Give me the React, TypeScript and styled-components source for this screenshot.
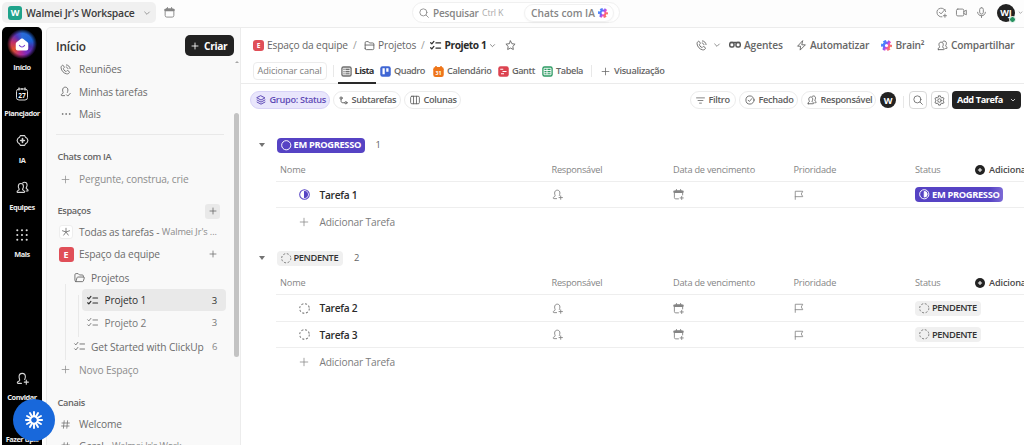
import React from "react";
import styled, { createGlobalStyle, css } from "styled-components";

const Global = createGlobalStyle`
  * { box-sizing: border-box; }
  body {
    margin: 0;
    background: #fdfdfd;
    font-family: "Open Sans", "Noto Sans", sans-serif;
    font-size: 10.2px;
    letter-spacing: -0.15px;
    color: #656565;
    overflow: hidden;
  }
`;

/* ---------- icons ---------- */

const paths: Record<string, React.ReactNode> = {
  chevron: <path d="M5 9l7 7 7-7" />,
  plus: <path d="M12 3v18M3 12h18" />,
  search: <><circle cx="10.5" cy="10.5" r="8.5" /><path d="M17 17L22.500 22.500" /></>,
  calendar: <><rect x="2.5" y="4" width="19" height="18" rx="3.5" /><path d="M3 6.500h18" strokeWidth="5" /><path d="M7.5 1v5M16.5 1v5" /></>,
  calendarPlus: <><path d="M12 21.5H6A3 3 0 0 1 3 18.500V7a3 3 0 0 1 3-3h12a3 3 0 0 1 3 3v6" /><path d="M3 6h18" strokeWidth="5" /><path d="M7.500 1v5M16.500 1v5M19 16v7M15.500 19.500h7" /></>,
  phone: <path d="M9.300 13.600c2 2.300 3.600 2.900 4.300 2.600l1.400-1.500c.6-.5 1.300-.6 2-.2l3 1.900c.8.6 1 1.500.5 2.300-1.300 2.200-3.500 3.300-6 2.800C8 20.300 2.900 14.400 2.300 8.400 2.100 6 3.200 4 5.200 2.900c.8-.4 1.700-.2 2.200.6l1.700 2.900c.4.700.3 1.400-.2 2L7.500 9.900c-.3.700.3 2.100 1.800 3.700zM13.500 6.500c2 .3 3.500 1.800 3.800 3.800M14 2c4.200.3 7.600 3.700 8 8" />,
  person: <path d="M10 21H4.500C2.500 21 2 19.600 3 18.400c1-1.200 2.700-1.600 3.600-2.600 1-1.200-.9-3.300-.9-7C5.700 5 8.200 2.500 11.500 2.500S17.300 5 17.300 8.800c0 2.400-1 4-1.300 5.200" />,
  dots: <><circle cx="3.500" cy="12" r="1" /><circle cx="12" cy="12" r="1" /><circle cx="20.500" cy="12" r="1" /></>,
  people: <><path d="M3 21h11.500c1.700 0 2-1.500 1-2.500-1.100-1.200-3.200-1.700-3.400-3-.2-1.200 1.600-2.300 1.600-5.500 0-3.300-1.800-5.300-4.700-5.300S4.300 6.700 4.300 10c0 3.200 1.800 4.300 1.600 5.500-.2 1.300-2.300 1.800-3.400 3-.9 1-.6 2.500.5 2.500z" /><path d="M12.500 3.500C13.500 2.600 14.500 2.300 15.600 2.300c3 0 4.900 2 4.900 5.200 0 3-1.900 4.300-1.700 5.500.2 1.300 1.800 1.700 2.800 2.900 1.100 1.300.8 2.600-.8 2.600h-2" /></>,
  folder: <><path d="M2.500 18V6A2.500 2.500 0 0 1 5 3.500h4.500L12 6.500h7A2.500 2.500 0 0 1 21.500 9v9.500A2.500 2.500 0 0 1 19 21H5a2.500 2.500 0 0 1-2.500-3zM2.500 11h19" /></>,
  folderOpen: <path d="M4 21L2 18V6a2.500 2.500 0 0 1 2.500-2.500H9L12 6.500h6A2.500 2.500 0 0 1 20.500 9v2M4 21h14.500a2 2 0 0 0 1.900-1.400l2-6.300A1.800 1.800 0 0 0 20.700 11H8.500a2 2 0 0 0-1.900 1.400L4 21z" />,
  list: <path d="M1.500 6l2.500 2.500L8.500 3M1.500 17l2.500 2.500L8.500 14M13 6.500h10M13 17.500h10" />,
  star: <path d="M12 2l3.100 6.100 6.900 1-4.900 4.800 1.100 6.800L12 17.600l-6.200 3.100 1.100-6.800L2 9.100l6.900-1z" />,
  bolt: <path d="M14 2L3.500 13.500h6.500L9 22l11.500-11.500H13.500z" />,
  gear: <><circle cx="12" cy="12" r="3.800" /><path d="M10 2h4l.8 3 2.200 1.200 3-.8 2 3.500-2.200 2.100v2L22 15.200l-2 3.400-3-.8-2.200 1.300L14 22h-4l-.8-2.900L7 17.800l-3 .8-2-3.400L4.200 13v-2L2 8.900l2-3.500 3 .8L9.200 5z" /></>,
  layers: <path d="M12 2l9.500 5L12 12 2.500 7zM2.500 12l9.500 5 9.500-5M2.500 17l9.500 5 9.500-5" />,
  subtasks: <><circle cx="5.500" cy="5.500" r="3" /><circle cx="18.500" cy="18" r="3" /><path d="M5.500 8.500V13c0 3.500 1.500 5 5 5h5" /></>,
  columns: <><rect x="1.500" y="3" width="21" height="18" rx="3" /><path d="M8.500 3v18M15.500 3v18" /></>,
  filter: <path d="M1.500 5h21M5.500 12h13M9.500 19h5" />,
  check: <><circle cx="12" cy="12" r="9.800" /><path d="M7.500 12.500l3 3 6-7" /></>,
  checkPlus: <><path d="M21 10A9.500 9.500 0 1 0 13 21.500M7.500 11.500l3.500 3.500L20 5" /><path d="M19.500 15.500v7M16 19h7" /></>,
  video: <path d="M4 4.500h10a3 3 0 0 1 3 3v9a3 3 0 0 1-3 3H4a3 3 0 0 1-3-3v-9a3 3 0 0 1 3-3zM17 10l5.500-3v10L17 14" />,
  mic: <><rect x="8" y="1.500" width="8" height="14" rx="4" /><path d="M3.500 11.500c.5 5 4 7.500 8.500 7.500s8-2.500 8.500-7.500M12 19v4" /></>,
  flag: <path d="M3 22.500V3h18l-3.500 6.500L21 16H3" />,
  hash: <path d="M8.500 2L6.500 22M17.500 2l-2 20M2.500 8h20M1.500 16h20" />,
  hex: <><path d="M8 3h8l1.500 3 3 2L22 12l-1.500 4-3 2L16 21H8l-1.500-3-3-2L2 12l1.500-4 3-2z" /><path d="M12 8.500v7M8.500 12h7" strokeWidth="3" /></>,
  asterisk: <path d="M12 12V3M12 12l8.500-3M12 12l5.500 7.500M12 12l-5.500 7.500M12 12L3.500 9" />,
};

type IconProps = { n: string; s?: number; w?: number; c?: string };

const Svg = styled.svg`
  display: block;
  flex: none;
  overflow: visible;
`;

const Icon = ({ n, s = 11, w = 2, c = "currentColor" }: IconProps) => (
  <Svg width={s} height={s} viewBox="0 0 24 24" fill="none" stroke={c} strokeWidth={w} strokeLinecap="round" strokeLinejoin="round">
    {paths[n]}
  </Svg>
);

const PersonMark = ({ s = 11, mark, w = 2 }: { s?: number; mark: "plus" | "check"; w?: number }) => (
  <Svg width={s} height={s} viewBox="0 0 24 24" fill="none" stroke="currentColor" strokeWidth={w} strokeLinecap="round" strokeLinejoin="round">
    {paths.person}
    <path d={mark === "plus" ? "M19 15v7.500M15.300 18.700h7.500" : "M14 19l3 3 5.500-6"} />
  </Svg>
);

const Brain = ({ s = 11 }: { s?: number }) => (
  <Svg width={s} height={s} viewBox="0 0 24 24">
    <defs>
      <linearGradient id="brain" x1="0" y1="0.200" x2="1" y2="0.800">
        <stop offset="0" stopColor="#3b8cff" />
        <stop offset="0.400" stopColor="#7a5cf5" />
        <stop offset="0.650" stopColor="#e84bd0" />
        <stop offset="1" stopColor="#ff7a45" />
      </linearGradient>
    </defs>
    <g fill="none" stroke="url(#brain)" strokeWidth="5">
      <circle cx="12" cy="12" r="6" />
      <circle cx="12" cy="12" r="9.500" strokeDasharray="6 3.950" strokeDashoffset="3" />
    </g>
  </Svg>
);

const StatusRing = ({ kind, c, s = 11 }: { kind: "open" | "half" | "dashed"; c: string; s?: number }) => (
  <Svg width={s} height={s} viewBox="0 0 24 24" fill="none" stroke={c} strokeWidth="2.200">
    <circle cx="12" cy="12" r="10.500" strokeDasharray={kind === "dashed" ? "4.500 3.750" : undefined} />
    {kind === "half" && <path d="M12 5.500a6.500 6.500 0 0 1 0 13z" fill={c} stroke={c} />}
  </Svg>
);

/* ---------- text ---------- */

const Text = styled.span<{ $w?: number; $size?: number; $weight?: number; $color?: string; $ls?: number; $ml?: number }>`
  flex: none;
  white-space: nowrap;
  line-height: 16px;
  ${(p) => p.$w !== undefined && css`width: ${p.$w}px;`}
  ${(p) => p.$size && css`font-size: ${p.$size}px;`}
  ${(p) => p.$weight && css`font-weight: ${p.$weight};`}
  ${(p) => p.$color && css`color: ${p.$color};`}
  ${(p) => p.$ls !== undefined && css`letter-spacing: ${p.$ls}px;`}
  margin-left: ${(p) => p.$ml ?? 0}px;
`;

const Small = styled(Text)`
  font-size: 9.200px;
  font-weight: ${(p) => p.$weight ?? 600};
  letter-spacing: ${(p) => p.$ls ?? -0.32}px;
`;

/* ---------- top bar ---------- */

const Screen = styled.div`
  position: relative;
  width: 1024px;
  height: 445px;
  overflow: hidden;
  display: flex;
  flex-direction: column;
`;

const TopBar = styled.header`
  flex: none;
  height: 27px;
  display: flex;
  align-items: flex-start;
  padding: 2px 1px 0 2px;
`;

const Workspace = styled.div`
  flex: none;
  width: 154px;
  height: 21px;
  border-radius: 5px;
  background: #f0f0f0;
  display: flex;
  align-items: center;
  padding-left: 6px;
`;

const Tile = styled.span<{ $bg: string; $s: number; $fs: number; $r?: number }>`
  flex: none;
  width: ${(p) => p.$s}px;
  height: ${(p) => p.$s}px;
  border-radius: ${(p) => p.$r ?? 3}px;
  background: ${(p) => p.$bg};
  color: #fff;
  font-weight: 700;
  font-size: ${(p) => p.$fs}px;
  display: flex;
  align-items: center;
  justify-content: center;
`;

const TopSlot = styled.div<{ $ml: number }>`
  margin-left: ${(p) => p.$ml}px;
  height: 21px;
  display: flex;
  align-items: center;
`;

const SearchBox = styled.div`
  flex: none;
  margin-left: 237px;
  width: 208px;
  height: 21px;
  border: 1px solid #f0f0f0;
  border-radius: 11px;
  background: #fff;
  display: flex;
  align-items: center;
  padding-left: 6px;
  color: #858585;
`;

const ChatPill = styled.div`
  flex: none;
  height: 18px;
  width: 90px;
  margin-left: 19px;
  border-radius: 9px;
  border: 1px solid #f1f1f1;
  box-shadow: 0 1px 2px rgba(0, 0, 0, 0.04);
  display: flex;
  align-items: center;
  padding-left: 6px;
`;

const TopActions = styled.div`
  flex: none;
  margin-left: auto;
  height: 21px;
  display: flex;
  align-items: center;
  gap: 9px;
  color: #7e7e7e;
`;

const Account = styled.div`
  display: flex;
  align-items: center;
  gap: 3px;
  margin-left: 1.500px;
`;

const Avatar = styled.span<{ $s: number }>`
  position: relative;
  flex: none;
  width: ${(p) => p.$s}px;
  height: ${(p) => p.$s}px;
  border-radius: 50%;
  background: #222;
  color: #fff;
  font-size: 9px;
  font-weight: 700;
  display: flex;
  align-items: center;
  justify-content: center;
`;

const Online = styled.i`
  position: absolute;
  right: -1px;
  bottom: -1px;
  width: 7px;
  height: 7px;
  border-radius: 50%;
  background: #27915f;
  border: 0.500px solid #fff;
`;

/* ---------- left rail ---------- */

const Body = styled.div`
  flex: 1;
  min-height: 0;
  display: flex;
`;

const Rail = styled.nav`
  flex: none;
  width: 40px;
  margin-left: 2px;
  background: #000;
  border-radius: 5px 5px 0 0;
  color: #fff;
  display: flex;
  flex-direction: column;
  align-items: center;
`;

const RailItem = styled.div<{ $h?: number }>`
  height: ${(p) => p.$h ?? 47}px;
  width: 40px;
  flex: none;
  display: flex;
  flex-direction: column;
  align-items: center;
  color: #d8d8d8;
`;

const RailIcon = styled.div<{ $h?: number }>`
  height: ${(p) => p.$h ?? 27}px;
  display: flex;
  align-items: center;
`;

const RailLabel = styled.span`
  font-size: 7.400px;
  font-weight: 700;
  line-height: 12px;
  letter-spacing: -0.450px;
  white-space: nowrap;
  color: #ececec;
`;

const Glow = styled.div`
  width: 30px;
  height: 30px;
  border-radius: 50%;
  background: radial-gradient(circle, rgba(0, 0, 0, 0) 50%, #000 71%),
    conic-gradient(from 0deg, #2a6bd8, #1b62d6 20%, #4a2fa8 30%, #7a2cc0 42%, #b52a92 52%, #e0522c 66%, #c0306a 78%, #5534b8 90%, #2a6bd8);
  display: flex;
  align-items: center;
  justify-content: center;
`;

const RailSpacer = styled.div`
  flex: 1;
`;

const Launcher = styled.button`
  position: absolute;
  left: 13px;
  top: 399px;
  width: 42px;
  height: 42px;
  padding: 0;
  border: 0;
  border-radius: 50%;
  background: #1868db;
  display: flex;
  align-items: center;
  justify-content: center;
`;

/* ---------- sidebar ---------- */

const Sidebar = styled.aside`
  position: relative;
  flex: none;
  width: 195px;
  margin-left: 4px;
  background: #f9f9f9;
  border: 1px solid #ececec;
  border-bottom: 0;
  border-radius: 5px 0 0 0;
  height: 418px;
  overflow: hidden;
`;

const SideHead = styled.div`
  height: 30px;
  padding: 5px 6px 0 9px;
  display: flex;
  justify-content: space-between;
  align-items: center;
`;

const CreateButton = styled.button`
  width: 49px;
  height: 21px;
  padding: 0 0 0 6px;
  border: 0;
  border-radius: 5px;
  background: #222;
  color: #fff;
  font: inherit;
  display: flex;
  align-items: center;
`;

const SideRow = styled.div<{ $h: number; $color?: string }>`
  position: relative;
  height: ${(p) => p.$h}px;
  display: flex;
  align-items: center;
  color: ${(p) => p.$color ?? "#6c6c6c"};
`;

const IconCell = styled.span<{ $w?: number }>`
  flex: none;
  width: ${(p) => p.$w ?? 32}px;
  padding-left: ${(p) => (p.$w ? 0 : 11.5)}px;
  display: flex;
  align-items: center;
`;

const IconCenter = styled.span`
  width: 14px;
  flex: none;
  display: flex;
  justify-content: center;
`;

const Divider = styled.hr`
  border: 0;
  border-top: 1px solid #e9e9e9;
  margin: 9px 16px 9px 9px;
`;

const SideTitle = styled.div<{ $h: number; $mt?: number }>`
  margin-top: ${(p) => p.$mt ?? 0}px;
  height: ${(p) => p.$h}px;
  padding-left: 10.500px;
  display: flex;
  align-items: center;
`;

const AddTile = styled.span`
  width: 15px;
  height: 15px;
  border-radius: 3px;
  background: #e9e9e9;
  display: flex;
  align-items: center;
  justify-content: center;
`;

const WhiteTile = styled.span`
  width: 14px;
  height: 14px;
  border-radius: 3px;
  background: #fff;
  border: 1px solid #eee;
  color: #858585;
  display: flex;
  align-items: center;
  justify-content: center;
`;

const Tree = styled.div`
  margin-left: 18px;
  position: relative;
`;

const TreeLine = styled.i<{ $x: number; $top: number; $h: number }>`
  position: absolute;
  left: ${(p) => p.$x}px;
  top: ${(p) => p.$top}px;
  width: 1px;
  height: ${(p) => p.$h}px;
  background: #e9e9e9;
`;

const ProjectRow = styled.div<{ $h: number; $active?: boolean }>`
  height: ${(p) => p.$h}px;
  margin: 0 14px 0 17px;
  padding: 0 9px 0 5px;
  border-radius: 4px;
  display: flex;
  align-items: center;
  background: ${(p) => (p.$active ? "#e9e9e9" : "transparent")};
  color: ${(p) => (p.$active ? "#2f2f2f" : "#777")};
`;

const Count = styled.span`
  margin-left: auto;
  font-size: 9.500px;
`;

const ScrollThumb = styled.i`
  position: absolute;
  right: 1px;
  top: 85px;
  width: 5px;
  height: 244px;
  border-radius: 2.500px;
  background: #c3c3c3;
`;

const ScrollArrow = styled.i`
  position: absolute;
  right: 1px;
  top: 33px;
  border: 2.500px solid transparent;
  border-top: 0;
  border-bottom: 2.500px solid #a5a5a5;
`;

/* ---------- main ---------- */

const Main = styled.main`
  flex: 1;
  min-width: 0;
  height: 418px;
  overflow: hidden;
  background: #fff;
  border-top: 1px solid #ececec;
`;

const Crumbs = styled.div`
  height: 34px;
  padding-left: 12px;
  display: flex;
  align-items: center;
  color: #666;
`;

const Tabs = styled.div`
  height: 22px;
  padding-left: 12px;
  border-bottom: 1px solid #ebebeb;
  display: flex;
  align-items: flex-start;
`;

const ChannelButton = styled.span`
  flex: none;
  width: 74px;
  height: 18px;
  padding-left: 3.500px;
  border: 1px solid #ececec;
  border-radius: 4px;
  display: flex;
  align-items: center;
  color: #7d7d7d;
`;

const Bar = styled.i<{ $l: number; $r: number }>`
  flex: none;
  width: 1px;
  height: 12px;
  margin: 3px ${(p) => p.$r}px 0 ${(p) => p.$l}px;
  background: #e8e8e8;
`;

const Tab = styled.div<{ $w: number; $active?: boolean }>`
  flex: none;
  width: ${(p) => p.$w}px;
  height: 22px;
  padding: 0 0 2px ${(p) => (p.$active ? 3 : 0)}px;
  margin-right: ${(p) => (p.$active ? 4.5 : 0)}px;
  display: flex;
  align-items: center;
  gap: 3px;
  border-bottom: 2px solid ${(p) => (p.$active ? "#2a2a2a" : "transparent")};
`;

const Filters = styled.div`
  height: 32px;
  padding: 0 0 0 9px;
  display: flex;
  align-items: center;
`;

const Pill = styled.div<{ $w: number; $mr: number; $on?: boolean }>`
  flex: none;
  width: ${(p) => p.$w}px;
  height: 18px;
  margin-right: ${(p) => p.$mr}px;
  padding-left: 5px;
  border-radius: 9px;
  border: 1px solid ${(p) => (p.$on ? "#d8d3f7" : "#ececec")};
  background: ${(p) => (p.$on ? "#e9e6fc" : "#fff")};
  color: ${(p) => (p.$on ? "#5f4bb6" : "#5c5c5c")};
  display: flex;
  align-items: center;
  gap: 3.500px;
`;

const SquareButton = styled.span`
  flex: none;
  width: 18px;
  height: 18px;
  margin-right: 3.500px;
  border: 1px solid #d9d9d9;
  border-radius: 4px;
  display: flex;
  align-items: center;
  justify-content: center;
`;

const AddTask = styled.button`
  flex: none;
  width: 69px;
  height: 18px;
  padding: 0 5px 0 5px;
  border: 0;
  border-radius: 4px;
  background: #222;
  color: #fff;
  font: inherit;
  display: flex;
  align-items: center;
  justify-content: space-between;
`;

const Spacer = styled.i<{ $w?: number }>`
  flex: ${(p) => (p.$w ? "none" : "1")};
  width: ${(p) => p.$w ?? 0}px;
`;

const Group = styled.section<{ $mt: number }>`
  margin-top: ${(p) => p.$mt}px;
  padding-left: 35px;
`;

const GroupHead = styled.div`
  height: 20px;
  margin-left: -17px;
  display: flex;
  align-items: center;
`;

const Caret = styled.i`
  width: 0;
  border: 3.500px solid transparent;
  border-bottom: 0;
  border-top: 4.500px solid #737373;
  margin-right: 11.500px;
`;

const Badge = styled.span<{ $purple?: boolean; $w: number; $fade?: boolean }>`
  width: ${(p) => p.$w}px;
  height: 15px;
  padding-left: 4px;
  border-radius: 4px;
  background: ${(p) => (p.$purple ? (p.$fade ? "linear-gradient(90deg, #5643c4 85%, #7d6bd6)" : "#5643c4") : "#f0f0f0")};
  color: ${(p) => (p.$purple ? "#fff" : "#333")};
  display: flex;
  align-items: center;
  gap: 2.500px;
`;

const Row = styled.div<{ $h: number; $line?: boolean; $pt?: number }>`
  height: ${(p) => p.$h}px;
  padding-top: ${(p) => p.$pt ?? 0}px;
  display: grid;
  grid-template-columns: 275.500px 121.500px 120.500px 121.500px 60px auto;
  align-items: center;
  border-bottom: 1px solid ${(p) => (p.$line === false ? "transparent" : "#eeeeee")};
  color: #858585;
  white-space: nowrap;
`;

const NameCell = styled.div`
  display: flex;
  align-items: center;
  padding-left: 23px;
`;

const AddField = styled.div`
  display: flex;
  align-items: center;
  gap: 4px;
`;

const PlusDisc = () => (
  <Svg width="10" height="10" viewBox="0 0 24 24">
    <circle cx="12" cy="12" r="12" fill="#222" />
    <path d="M12 7v10M7 12h10" stroke="#fff" strokeWidth="2.500" />
  </Svg>
);

const ViewTile = ({ kind }: { kind: "list" | "board" | "cal" | "gantt" | "table" }) => {
  const bg = { list: "#707070", board: "#3f66d4", cal: "#ee7519", gantt: "#dc4350", table: "#2c9b63" }[kind];
  return (
    <Svg width="11" height="11" viewBox="0 0 22 22">
      {kind === "cal" && <path d="M6 0v5M16 0v5" stroke={bg} strokeWidth="3" />}
      <rect x="0.500" y={kind === "cal" ? 2 : 0.500} width="21" height={kind === "cal" ? 20 : 21} rx="4.500" fill={bg} />
      {kind === "list" && <path d="M4 4.500h14v13H4zM4 9h14M4 13.500h14M8 4.500v13" stroke="#fff" strokeWidth="1.600" fill="none" />}
      {kind === "board" && <path d="M5 4.500h4.500v12H5zM12.500 4.500H17v7h-4.500z" fill="#fff" />}
      {kind === "cal" && (
        <text x="11" y="17" fontSize="10.500" fontWeight="700" fill="#fff" textAnchor="middle">31</text>
      )}
      {kind === "gantt" && <path d="M4.500 6.500h6M9 11h8M6 15.500h6" stroke="#fff" strokeWidth="2.400" />}
      {kind === "table" && <path d="M4 4.500h14v13H4zM4 9h14M4 13.500h14M10 4.500v13" stroke="#fff" strokeWidth="1.800" fill="none" />}
    </Svg>
  );
};

const Glasses = () => (
  <Svg width="12" height="8" viewBox="0 0 24 16" fill="none" stroke="#555" strokeWidth="3">
    <rect x="1.500" y="3" width="8.500" height="9" rx="3" />
    <rect x="14" y="3" width="8.500" height="9" rx="3" />
    <path d="M2 3h20" />
  </Svg>
);

const RailCalendar = () => (
  <Svg width="14" height="14" viewBox="0 0 28 28" fill="none" stroke="#d8d8d8" strokeWidth="2">
    <rect x="3" y="4" width="22" height="22" rx="5" />
    <path d="M8 1v6M20 1v6M14 2v4" strokeWidth="2.500" />
    <text x="14" y="21.500" fontSize="13" fontWeight="700" fill="#fff" stroke="none" textAnchor="middle">27</text>
  </Svg>
);

const Grid9 = () => (
  <Svg width="12" height="12" viewBox="0 0 12 12" fill="#d8d8d8">
    {[1.3, 6, 10.7].map((y) => [1.3, 6, 10.7].map((x) => <circle key={`${x}-${y}`} cx={x} cy={y} r="1.050" />))}
  </Svg>
);

const InProgress = ({ half }: { half?: boolean }) => (
  <Badge $purple $fade={half} $w={88}>
    <StatusRing kind={half ? "half" : "open"} c="#fff" s={10.5} />
    <Text $weight={700} $size={9.3} $ls={-0.33}>EM PROGRESSO</Text>
  </Badge>
);

const Pending = () => (
  <Badge $w={66}>
    <StatusRing kind="dashed" c="#777" s={10.5} />
    <Text $weight={600} $size={9.3} $ls={-0.4}>PENDENTE</Text>
  </Badge>
);

const TaskRow = ({ name, half, h }: { name: string; half?: boolean; h: number }) => (
  <Row $h={h}>
    <NameCell>
      <StatusRing kind={half ? "half" : "dashed"} c={half ? "#5643c4" : "#777"} />
      <Text $ml={9.5} $weight={600} $color="#2b2b2b" $size={10.2} $ls={-0.28}>{name}</Text>
    </NameCell>
    <PersonMark mark="plus" w={2} />
    <Icon n="calendarPlus" />
    <Icon n="flag" s={10} />
    {half ? <InProgress half /> : <Pending />}
    <i />
  </Row>
);

const HeadRow = ({ h }: { h: number }) => (
  <Row $h={h} $pt={3}>
    <Small $weight={500} $ls={-0.15} $ml={4}>Nome</Small>
    <Small $weight={500} $ls={-0.25}>Responsável</Small>
    <Small $weight={500} $ls={-0.22}>Data de vencimento</Small>
    <Small $weight={500} $ls={-0.2}>Prioridade</Small>
    <Small $weight={500} $ls={-0.2}>Status</Small>
    <AddField>
      <PlusDisc />
      <Small $color="#4a4a4a" $ls={-0.15}>Adicionar</Small>
    </AddField>
  </Row>
);

const AddRow = ({ h }: { h: number }) => (
  <Row $h={h} $line={false}>
    <NameCell>
      <Icon n="plus" s={10} w={1.8} />
      <Text $ml={10.5} $color="#7c7c7c">Adicionar Tarefa</Text>
    </NameCell>
  </Row>
);

export default function App() {
  return (
    <Screen>
      <Global />
      <TopBar>
        <Workspace>
          <Tile $bg="#1fa38b" $s={14} $fs={9}>W</Tile>
          <Text $w={117} $ml={4} $weight={600} $color="#3c3c3c" $size={10.4} $ls={-0.23}>Walmei Jr's Workspace</Text>
          <Icon n="chevron" s={8} w={2.5} c="#888" />
        </Workspace>
        <TopSlot $ml={8}><Icon n="calendar" s={11} c="#858585" /></TopSlot>
        <SearchBox>
          <Icon n="search" s={10} />
          <Text $w={49} $ml={4} $weight={600} $size={10}>Pesquisar</Text>
          <Text $w={23} $size={8.8} $color="#aaa">Ctrl K</Text>
          <ChatPill>
            <Text $w={67} $weight={600} $ls={0}>Chats com IA</Text>
            <Brain s={10} />
          </ChatPill>
        </SearchBox>
        <TopActions>
          <Icon n="checkPlus" s={11} />
          <Icon n="video" s={11} />
          <Icon n="mic" s={11} />
          <Account>
            <Avatar $s={18}>WJ<Online /></Avatar>
            <Icon n="chevron" s={5} w={3} />
          </Account>
        </TopActions>
      </TopBar>

      <Body>
        <Rail>
          <RailItem $h={53}>
            <RailIcon $h={34}>
              <Glow>
                <Svg width="14" height="13" viewBox="0 0 28 26">
                  <path d="M12 1.500c1.200-1 2.800-1 4 0l9 7c1 .8 1.500 1.800 1.500 3V21a4 4 0 0 1-4 4h-17a4 4 0 0 1-4-4v-9.500c0-1.200.5-2.200 1.500-3z" fill="#fff" />
                  <path d="M9 15c2.500 4 7.500 4 10 0" fill="none" stroke="#7b3fd0" strokeWidth="2.400" strokeLinecap="round" />
                </Svg>
              </Glow>
            </RailIcon>
            <RailLabel>Início</RailLabel>
          </RailItem>
          <RailItem><RailIcon><RailCalendar /></RailIcon><RailLabel>Planejador</RailLabel></RailItem>
          <RailItem><RailIcon><Icon n="hex" s={13} /></RailIcon><RailLabel>IA</RailLabel></RailItem>
          <RailItem><RailIcon><Icon n="people" s={13} /></RailIcon><RailLabel>Equipes</RailLabel></RailItem>
          <RailItem><RailIcon><Grid9 /></RailIcon><RailLabel>Mais</RailLabel></RailItem>
          <RailSpacer />
          <RailItem $h={43}><RailIcon $h={26}><PersonMark mark="plus" s={13} /></RailIcon><RailLabel>Convidar</RailLabel></RailItem>
          <RailItem $h={37}><RailIcon $h={26} /><RailLabel>Fazer up...</RailLabel></RailItem>
        </Rail>

        <Sidebar>
          <SideHead>
            <Text $size={11.8} $weight={600} $color="#333">Início</Text>
            <CreateButton>
              <Icon n="plus" s={8} w={2.6} />
              <Text $ml={5} $weight={700} $size={10.2} $ls={-0.35}>Criar</Text>
            </CreateButton>
          </SideHead>
          <SideRow $h={22}><IconCell><IconCenter><Icon n="phone" /></IconCenter></IconCell><Text>Reuniões</Text></SideRow>
          <SideRow $h={23}><IconCell><IconCenter><PersonMark mark="check" /></IconCenter></IconCell><Text>Minhas tarefas</Text></SideRow>
          <SideRow $h={22}><IconCell><IconCenter><Icon n="dots" s={10} /></IconCenter></IconCell><Text>Mais</Text></SideRow>
          <Divider />
          <SideTitle $h={26}><Small>Chats com IA</Small></SideTitle>
          <SideRow $h={18} $color="#8d8d8d"><IconCell><IconCenter><Icon n="plus" s={9} /></IconCenter></IconCell><Text>Pergunte, construa, crie</Text></SideRow>
          <SideTitle $h={22} $mt={12}>
            <Small $w={147.5}>Espaços</Small>
            <AddTile><Icon n="plus" s={8} w={2.3} /></AddTile>
          </SideTitle>
          <SideRow $h={20}>
            <IconCell><WhiteTile><Icon n="asterisk" s={10} w={2.4} /></WhiteTile></IconCell>
            <Text $ls={-0.17}>Todas as tarefas -</Text>
            <Text $ml={2.5} $size={9.2} $ls={-0.1} $color="#8b8b8b">Walmei Jr's ...</Text>
          </SideRow>
          <SideRow $h={24}>
            <IconCell><Tile $bg="#e04f58" $s={15} $fs={9}>E</Tile></IconCell>
            <Text $w={130}>Espaço da equipe</Text>
            <Icon n="plus" s={8} w={2.3} />
          </SideRow>
          <Tree>
            <TreeLine $x={0} $top={18} $h={76} />
            <TreeLine $x={13} $top={29} $h={42} />
            <SideRow $h={23}>
              <Spacer $w={8.5} /><IconCell $w={17.5}><Icon n="folderOpen" s={11} /></IconCell><Text>Projetos</Text>
            </SideRow>
            <ProjectRow $h={22} $active><IconCell $w={17.5}><Icon n="list" s={11} w={2.6} /></IconCell><Text>Projeto 1</Text><Count>3</Count></ProjectRow>
            <ProjectRow $h={23}><IconCell $w={17.5}><Icon n="list" s={11} /></IconCell><Text>Projeto 2</Text><Count>3</Count></ProjectRow>
            <SideRow $h={25}>
              <Spacer $w={8.5} /><IconCell $w={17.5}><Icon n="list" s={11} /></IconCell>
              <Text $w={121} $ls={-0.1}>Get Started with ClickUp</Text><Text $size={9.5} $color="#888">6</Text>
            </SideRow>
          </Tree>
          <SideRow $h={21} $color="#8d8d8d"><IconCell><IconCenter><Icon n="plus" s={9} /></IconCenter></IconCell><Text>Novo Espaço</Text></SideRow>
          <SideTitle $h={22} $mt={12}><Small>Canais</Small></SideTitle>
          <SideRow $h={20}><IconCell><IconCenter><Icon n="hash" s={9} /></IconCenter></IconCell><Text>Welcome</Text></SideRow>
          <SideRow $h={24}>
            <IconCell><IconCenter><Icon n="hash" s={9} /></IconCenter></IconCell><Text>Geral -</Text>
            <Text $ml={2.5} $size={9.2} $color="#8b8b8b">Walmei Jr's Work...</Text>
          </SideRow>
          <ScrollArrow />
          <ScrollThumb />
        </Sidebar>

        <Main>
          <Crumbs>
            <Tile $bg="#e04f58" $s={11} $fs={6.5}>E</Tile>
            <Text $w={83} $ml={3}>Espaço da equipe</Text>
            <Text $w={10.5} $ml={3} $color="#999">/</Text>
            <Icon n="folder" s={11} />
            <Text $w={39} $ml={3.5}>Projetos</Text>
            <Text $w={9} $ml={4} $color="#999">/</Text>
            <Icon n="list" s={11} w={2.8} c="#2f2f2f" />
            <Text $w={44.5} $ml={3.5} $weight={700} $color="#2b2b2b" $ls={-0.42}>Projeto 1</Text>
            <Icon n="chevron" s={7} w={2.6} />
            <Spacer $w={8.5} />
            <Icon n="star" s={11} />
            <Spacer />
            <Icon n="phone" s={11} />
            <Spacer $w={6.5} />
            <Icon n="chevron" s={8} w={2.2} />
            <Spacer $w={8} />
            <Glasses />
            <Text $w={52} $ml={3} $weight={600} $ls={-0.12}>Agentes</Text>
            <Icon n="bolt" s={11} />
            <Text $w={71} $ml={3} $weight={600} $ls={-0.18}>Automatizar</Text>
            <Brain s={11} />
            <Text $w={41} $ml={3.5} $weight={600} $ls={-0.2}>Brain²</Text>
            <Icon n="people" s={11} />
            <Text $w={73} $ml={3.5} $weight={600} $ls={-0.18}>Compartilhar</Text>
          </Crumbs>
          <Tabs>
            <ChannelButton><Small $weight={400} $ls={-0.08}>Adicionar canal</Small></ChannelButton>
            <Bar $l={6} $r={3.5} />
            <Tab $w={38} $active><ViewTile kind="list" /><Small $weight={700} $color="#333" $ls={-0.55}>Lista</Small></Tab>
            <Tab $w={53}><ViewTile kind="board" /><Small $ls={-0.45}>Quadro</Small></Tab>
            <Tab $w={65}><ViewTile kind="cal" /><Small $ls={-0.35}>Calendário</Small></Tab>
            <Tab $w={44}><ViewTile kind="gantt" /><Small $ls={-0.45}>Gantt</Small></Tab>
            <Tab $w={50}><ViewTile kind="table" /><Small $ls={-0.4}>Tabela</Small></Tab>
            <Bar $l={-1} $r={9} />
            <Tab $w={80}><Icon n="plus" s={9} /><Small $ml={1} $ls={-0.3}>Visualização</Small></Tab>
          </Tabs>
          <Filters>
            <Pill $w={80} $mr={3} $on><Icon n="layers" s={10} w={2.4} /><Small>Grupo: Status</Small></Pill>
            <Pill $w={68} $mr={3}><Icon n="subtasks" s={9} w={2.4} /><Small>Subtarefas</Small></Pill>
            <Pill $w={57} $mr={0}><Icon n="columns" s={10} /><Small>Colunas</Small></Pill>
            <Spacer />
            <Pill $w={46} $mr={3}><Icon n="filter" s={9} /><Small>Filtro</Small></Pill>
            <Pill $w={59} $mr={3}><Icon n="check" s={10} /><Small>Fechado</Small></Pill>
            <Pill $w={75} $mr={4}><Icon n="people" s={10} /><Small>Responsável</Small></Pill>
            <Avatar $s={16}>W</Avatar>
            <Bar $l={7} $r={5} />
            <SquareButton><Icon n="search" s={10} /></SquareButton>
            <SquareButton><Icon n="gear" s={11} /></SquareButton>
            <AddTask><Small $weight={700} $ls={-0.4}>Add Tarefa</Small><Icon n="chevron" s={6} w={3} /></AddTask>
            <Spacer $w={3} />
          </Filters>

          <Group $mt={19}>
            <GroupHead>
              <Caret />
              <InProgress />
              <Text $ml={11} $size={9.4}>1</Text>
            </GroupHead>
            <HeadRow h={27} />
            <TaskRow name="Tarefa 1" half h={26} />
            <AddRow h={28} />
          </Group>
          <Group $mt={12}>
            <GroupHead>
              <Caret />
              <Pending />
              <Text $ml={11.5} $size={9.4}>2</Text>
            </GroupHead>
            <HeadRow h={27} />
            <TaskRow name="Tarefa 2" h={27} />
            <TaskRow name="Tarefa 3" h={26} />
            <AddRow h={28} />
          </Group>
        </Main>
      </Body>
      <Launcher aria-label="Menu">
        <Svg width="20" height="20" viewBox="-12 -12 24 24" stroke="#fff" strokeWidth="2.300" strokeLinecap="round">
          {Array.from({ length: 12 }, (_, i) => (
            <path key={i} d="M0 -4.500V-9.700" transform={`rotate(${i * 30})`} />
          ))}
          <circle r="4.500" fill="none" />
        </Svg>
      </Launcher>
    </Screen>
  );
}
